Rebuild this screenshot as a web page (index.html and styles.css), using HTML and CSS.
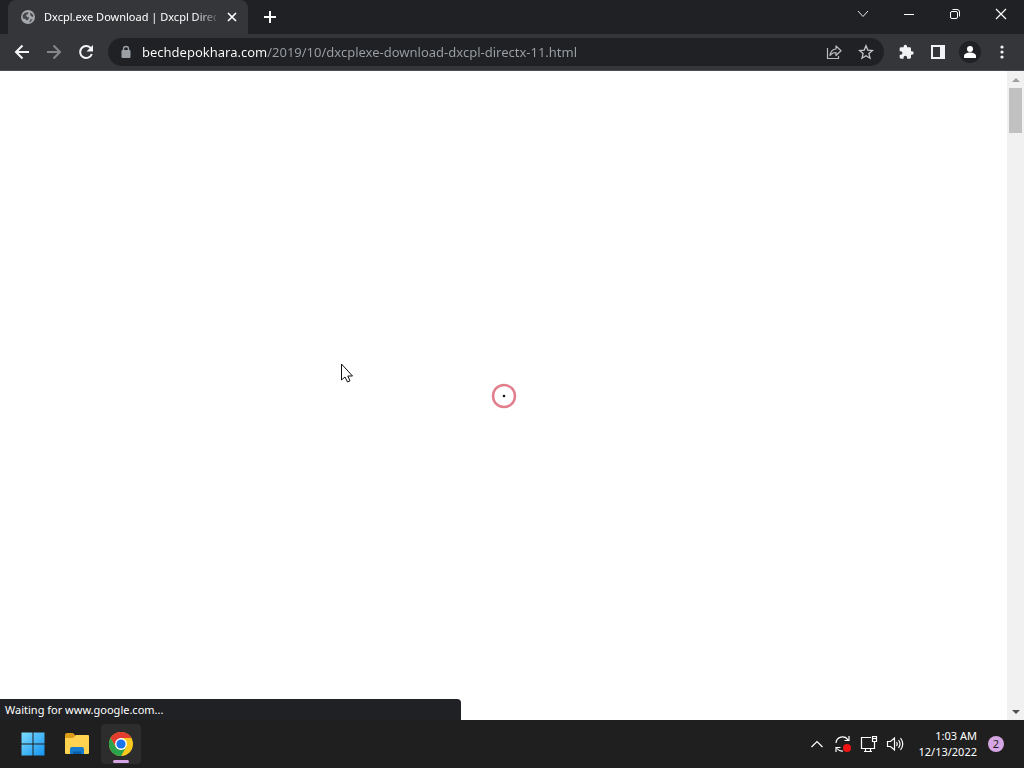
FILE: index.html
```html
<!DOCTYPE html>
<html lang="en">
<head>
<meta charset="utf-8">
<meta name="viewport" content="width=device-width, initial-scale=1">
<title>Dxcpl.exe Download | Dxcpl DirectX 11</title>
<link rel="stylesheet" href="styles.css">
</head>
<body>
<header class="browser">
  <div class="tabstrip">
    <div class="tab">
      <svg class="tab-icon" width="16" height="16" viewBox="0 0 16 16" aria-hidden="true"><circle cx="8" cy="8" r="7" fill="#a5a8ac"/><path d="M2.500 6.500 4.500 4 8.500 3 8 5 6 6 7 8 9 8.500 8.500 10.500 6.500 11.500 5.500 10 3 9.500ZM10 4 12 4.500 13.500 7 12.500 8 10.500 6.500ZM10.500 10.500 12.500 10 11 12.500 9 13.500Z" fill="#45474b"/></svg>
      <span class="tab-title">Dxcpl.exe Download | Dxcpl Direc</span>
      <button class="tab-close" aria-label="Close tab"><svg width="10" height="10" viewBox="0 0 10 10"><path d="m1 1 8 8M9 1 1 9" stroke="#fff" stroke-width="1.700"/></svg></button>
    </div>
    <button class="new-tab" aria-label="New tab"><svg width="14" height="14" viewBox="0 0 14 14"><path d="M7 1v12M1 7h12" stroke="#fff" stroke-width="2"/></svg></button>
    <div class="window-controls">
      <button aria-label="Search tabs"><svg width="12" height="12" viewBox="0 0 12 12"><path d="m1 3 5 5.500L11 3" stroke="#e8e8e8" fill="none"/></svg></button>
      <button aria-label="Minimize"><svg width="12" height="12" viewBox="0 0 12 12"><path d="M1 6.500h10" stroke="#fff"/></svg></button>
      <button aria-label="Restore"><svg width="12" height="12" viewBox="0 0 12 12" fill="none" stroke="#fff"><rect x="1.500" y="3.500" width="7" height="7" rx="1.500"/><path d="M3.500 1.500H8a2.500 2.500 0 0 1 2.500 2.500v4.500"/></svg></button>
      <button aria-label="Close"><svg width="12" height="12" viewBox="0 0 12 12"><path d="m1 1 10 10M11 1 1 11" stroke="#fff" stroke-width="1.200"/></svg></button>
    </div>
  </div>
  <div class="toolbar">
    <button class="tool" aria-label="Back"><svg width="16" height="16" viewBox="0 0 16 16" fill="none" stroke="#f5f6f7" stroke-width="2"><path d="M15 8H2.500M8.500 1.500 2 8l6.500 6.500"/></svg></button>
    <button class="tool" aria-label="Forward"><svg width="16" height="16" viewBox="0 0 16 16" fill="none" stroke="#85878a" stroke-width="2"><path d="M1 8h12.500M7.500 1.500 14 8l-6.500 6.500"/></svg></button>
    <button class="tool" aria-label="Reload"><svg width="16" height="16" viewBox="0 0 16 16"><path d="M13 4.500A6 6 0 1 0 13.800 10" fill="none" stroke="#f5f6f7" stroke-width="2"/><path d="M15 1v6.500H8.500Z" fill="#f5f6f7"/></svg></button>
    <div class="omnibox">
      <svg class="lock" width="12" height="14" viewBox="0 0 12 14" aria-hidden="true"><rect x="1.500" y="5" width="9" height="8" rx="1" fill="#9aa0a6"/><path d="M3.500 6V4a2.500 2.500 0 0 1 5 0v2" stroke="#9aa0a6" stroke-width="1.400" fill="none"/></svg>
      <input class="url" type="text" aria-label="Address" value="bechdepokhara.com/2019/10/dxcplexe-download-dxcpl-directx-11.html">
      <button class="tool" aria-label="Share"><svg width="16" height="16" viewBox="0 0 16 16" fill="none" stroke="#b9bcc0" stroke-width="1.200"><path d="M1.500 4v10.500h11V12"/><path d="M10 2v3C6.500 5.300 4.500 7.500 4 11.500 5.500 9.300 7.300 8.500 10 8.500v3L15 6.700Z" stroke-linejoin="round"/></svg></button>
      <button class="tool" aria-label="Bookmark"><svg width="16" height="16" viewBox="0 0 16 16"><path d="m8 1.800 1.800 4.300 4.700.4-3.600 3.100 1.100 4.600L8 11.700l-4 2.500 1.100-4.600-3.600-3.100 4.700-.4Z" fill="none" stroke="#c5c8cb" stroke-width="1.300"/></svg></button>
    </div>
    <button class="tool" aria-label="Extensions"><svg width="16" height="16" viewBox="0 0 24 24" fill="#f1f3f4"><path d="M21 11h-1.500V7a2 2 0 0 0-2-2h-4V3.500a2.500 2.500 0 0 0-5 0V5h-4a2 2 0 0 0-2 2v3.800H4a2.700 2.700 0 0 1 0 5.400H2.500V20a2 2 0 0 0 2 2h3.800v-1.500a2.700 2.700 0 0 1 5.400 0V22h3.800a2 2 0 0 0 2-2v-4H21a2.500 2.500 0 0 0 0-5Z"/></svg></button>
    <button class="tool" aria-label="Side panel"><svg width="16" height="16" viewBox="0 0 16 16"><path d="M1 1h14v14H1ZM3 3v10h7V3Z" fill="#f1f3f4" fill-rule="evenodd"/></svg></button>
    <button class="tool" aria-label="Profile"><svg width="22" height="22" viewBox="0 0 22 22"><circle cx="11" cy="11" r="11" fill="#202124"/><circle cx="11" cy="8" r="3" fill="#fff"/><path d="M5 17v-2c0-2.200 3-3.500 6-3.500s6 1.300 6 3.500v2Z" fill="#fff"/></svg></button>
    <button class="tool" aria-label="Menu"><svg width="16" height="16" viewBox="0 0 16 16" fill="#f1f3f4"><circle cx="8" cy="3" r="1.600"/><circle cx="8" cy="8" r="1.600"/><circle cx="8" cy="13" r="1.600"/></svg></button>
  </div>
</header>
<main class="viewport">
  <div class="page">
    <div class="loader" role="status" aria-label="Loading"><svg width="26" height="26" viewBox="0 0 26 26"><circle cx="13" cy="13" r="11" fill="none" stroke="#e27e8c" stroke-width="2.500"/><circle cx="13" cy="13" r="1.300" fill="#111"/></svg></div>
  </div>
  <div class="scrollbar">
    <button class="scroll-arrow" aria-label="Scroll up"><svg width="8" height="4" viewBox="0 0 8 4"><path d="M0 4 4 0l4 4Z" fill="#a0a0a0"/></svg></button>
    <div class="scroll-track"><div class="scroll-thumb"></div></div>
    <button class="scroll-arrow" aria-label="Scroll down"><svg width="8" height="4" viewBox="0 0 8 4"><path d="M0 0h8L4 4Z" fill="#505050"/></svg></button>
  </div>
  <div class="status">Waiting for www.google.com...</div>
</main>
<footer class="taskbar">
  <nav class="apps" aria-label="Apps">
    <button class="app" aria-label="Start"><svg width="24" height="24" viewBox="0 0 24 24"><defs><linearGradient id="win" x2="1" y2="1" gradientUnits="objectBoundingBox"><stop stop-color="#7cdcff"/><stop offset="1" stop-color="#1494f0"/></linearGradient></defs><path d="M.5.500h11v11H.5ZM12.500.500h11v11h-11ZM.5 12.500h11v11H.5ZM12.500 12.500h11v11h-11Z" fill="url(#win)"/></svg></button>
    <button class="app" aria-label="File Explorer"><svg width="26" height="24" viewBox="0 0 26 24"><path d="M1 3q0-2 2-2h6l3 3v4H1Z" fill="#dc9c16"/><path d="M1 6h8l3-3h12q1 0 1 1v17q0 1-1 1H2q-1 0-1-1Z" fill="#ffd350"/><path d="M6 22v-5q0-2 2-2h10q2 0 2 2v5Z" fill="#157bcc"/><path d="M9 22v-2.500h8V22Z" fill="#0b5fa8"/></svg></button>
    <button class="app active" aria-label="Google Chrome"><svg width="24" height="24" viewBox="0 0 24 24"><circle cx="12" cy="12" r="12" fill="#f9c91d"/><path d="M1.600 6A12 12 0 0 1 22.400 6H12L6.800 15Z" fill="#e33b2e"/><path d="M1.600 6A12 12 0 0 0 12 24l5.200-9L12 18 6.800 15Z" fill="#2ba24c"/><circle cx="12" cy="12" r="6" fill="#fff"/><circle cx="12" cy="12" r="4.600" fill="#1a73e8"/></svg></button>
  </nav>
  <div class="tray">
    <button class="tray-button" aria-label="Show hidden icons"><svg width="12" height="8" viewBox="0 0 12 8"><path d="m.5 7 5.500-5.500L11.500 7" fill="none" stroke="#fff" stroke-width="1.200"/></svg></button>
    <button class="tray-button" aria-label="Updates"><svg width="18" height="18" viewBox="0 0 18 18"><path d="M2 8a6.500 6.500 0 0 1 12-3M15 1v4.500h-4.500M2 17v-4.500h4.500M3 13.500A6.500 6.500 0 0 0 9 16" fill="none" stroke="#fff" stroke-width="1.200"/><circle cx="13" cy="13" r="4" fill="#f01414"/></svg></button>
    <button class="tray-button" aria-label="Network"><svg width="18" height="18" viewBox="0 0 18 18" fill="none" stroke="#fff" stroke-width="1.200"><path d="M11 2.500H1.500v11h13V8M5.500 13.500v3M10.500 13.500v3M4 16.500h8M12.500 1.500h4v5h-4ZM14.500 6.500v3"/><path d="M13 3.500h3"/></svg></button>
    <button class="tray-button" aria-label="Volume"><svg width="18" height="16" viewBox="0 0 18 16" fill="none" stroke="#fff" stroke-width="1.200"><path d="M1.500 5.500h3l4-3.500v12l-4-3.500h-3ZM10.500 6q1.500 2 0 4M12.500 4q3 4 0 8M14.500 2q4.500 6 0 12"/></svg></button>
    <button class="clock"><time>1:03 AM</time><time>12/13/2022</time></button>
    <button class="badge" aria-label="2 notifications">2</button>
  </div>
</footer>
<svg class="cursor" width="14" height="20" viewBox="0 0 14 20" aria-hidden="true"><path d="M1.500 1v16l3.500-3 2.500 5 2.500-1.200L7.800 13h4.700Z" fill="#fff" stroke="#111"/></svg>
</body>
</html>
```

FILE: styles.css
```css
* { box-sizing: border-box; }
html, body { height: 100%; }
body {
  margin: 0;
  display: flex;
  flex-direction: column;
  overflow: hidden;
  background: #fff;
  color: #fff;
  font: 11px/16px "Noto Sans", "Open Sans", sans-serif;
}
button {
  display: flex;
  align-items: center;
  justify-content: center;
  padding: 0;
  border: 0;
  background: none;
  color: inherit;
  font: inherit;
}
svg { display: block; flex: none; }

.browser { background: #35363a; border-bottom: 1px solid #4b4c4f; }
.tabstrip { display: flex; height: 34px; padding-left: 8px; background: #202124; }
.tab {
  display: flex;
  align-items: center;
  gap: 8px;
  width: 240px;
  padding: 0 8px 0 12px;
  border-radius: 8px 8px 0 0;
  background: #35363a;
}
.tab-title {
  flex: 1;
  min-width: 0;
  overflow: hidden;
  white-space: nowrap;
  mask-image: linear-gradient(to right, #000 88%, transparent 103%);
}
.tab-close { width: 16px; height: 16px; }
.new-tab { width: 28px; margin-left: 8px; }
.window-controls { display: flex; margin-left: auto; }
.window-controls button { width: 46px; height: 28px; }

.toolbar { display: flex; align-items: center; height: 36px; padding: 0 6px; }
.tool { width: 32px; height: 28px; flex: none; }
.omnibox {
  display: flex;
  align-items: center;
  flex: 1;
  min-width: 0;
  height: 28px;
  margin: 0 6px;
  padding: 0 2px 0 12px;
  border-radius: 14px;
  background: #202124;
}
.url {
  flex: 1;
  min-width: 0;
  height: 20px;
  margin-left: 10px;
  padding: 0;
  border: 0;
  outline: 0;
  background: linear-gradient(to right, #fff 125px, #9aa0a6 125px);
  background-clip: text;
  color: transparent;
  font: 13px/20px "Noto Sans", "Open Sans", sans-serif;
}

.viewport { position: relative; display: flex; flex: 1; min-height: 0; }
.page { display: grid; place-items: center; flex: 1; }
.scrollbar { display: flex; flex-direction: column; width: 17px; background: #f1f1f1; }
.scroll-arrow { width: 17px; height: 17px; }
.scroll-track { flex: 1; padding: 0 2px; }
.scroll-thumb { height: 45px; background: #c1c1c1; }
.status {
  position: absolute;
  left: 0;
  bottom: 0;
  width: 45%;
  padding: 3px 5px 2px;
  border-top-right-radius: 4px;
  background: #202124;
}

.taskbar {
  display: flex;
  justify-content: space-between;
  height: 48px;
  padding: 0 20px 0 13px;
  background: #1f1f20;
}
.apps { display: flex; align-items: center; gap: 4px; }
.app { position: relative; width: 40px; height: 40px; border-radius: 4px; }
.app.active { background: #2d2d2e; }
.app.active::after {
  content: "";
  position: absolute;
  left: 12px;
  right: 12px;
  bottom: 1px;
  height: 3px;
  border-radius: 2px;
  background: #d6a5e3;
}
.tray { display: flex; align-items: center; }
.tray-button { width: 26px; height: 40px; }
.clock {
  flex-direction: column;
  align-items: flex-end;
  margin: 0 11px 0 10px;
}
.badge {
  width: 16px;
  height: 16px;
  border-radius: 50%;
  background: #d6a5e3;
  color: #222;
}
.cursor { position: absolute; left: 340px; top: 363px; }
```
